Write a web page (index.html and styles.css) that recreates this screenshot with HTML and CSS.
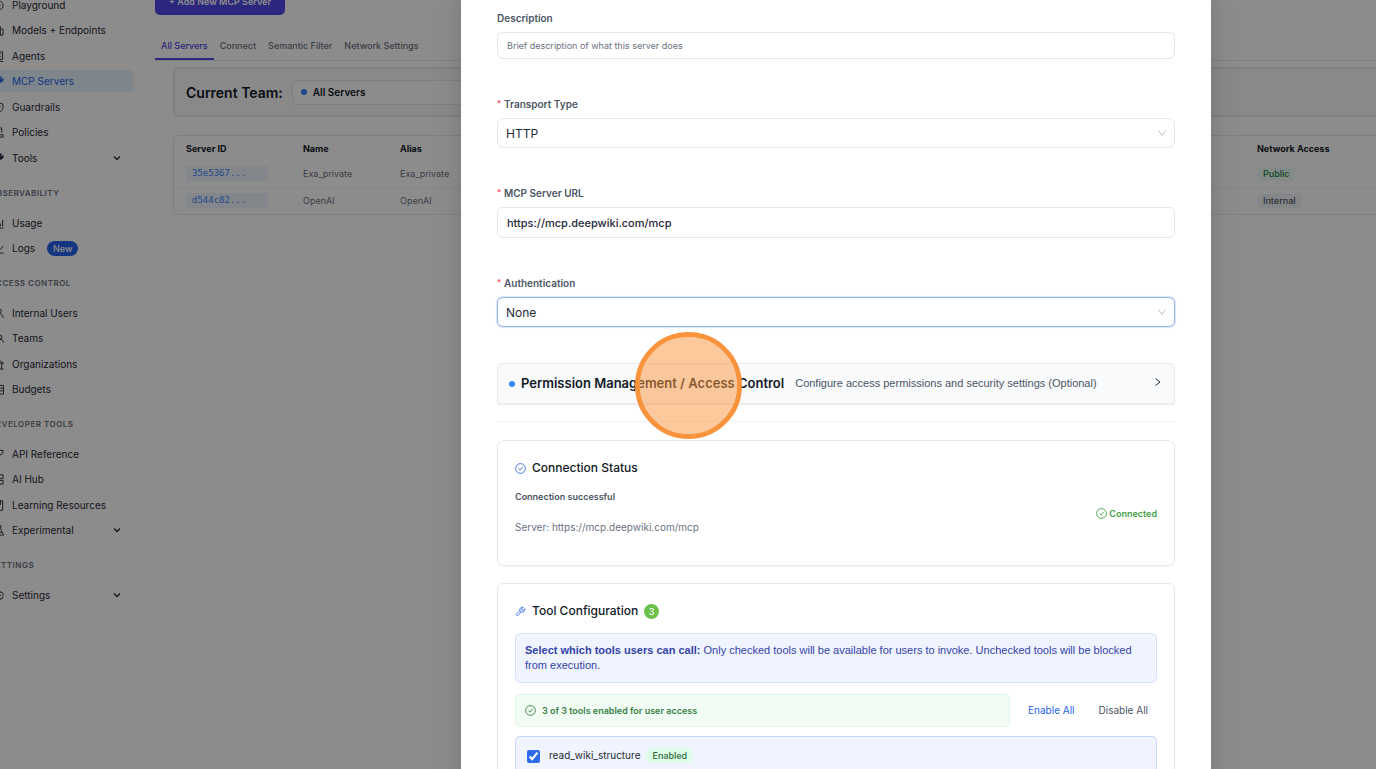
FILE: index.html
```
<!DOCTYPE html>
<html lang="en">
<head>
<meta charset="utf-8">
<title>MCP Servers</title>
<link rel="stylesheet" href="styles.css">
</head>
<body>
<div class="shell">
  <nav class="sidebar">
    <ul class="nav">
      <li><a class="nav-item" href="#"><svg class="icon" viewBox="0 0 12 12"><circle cx="6" cy="6" r="5"/><path d="M5 4l3 2-3 2z"/></svg>Playground</a></li>
      <li><a class="nav-item" href="#"><svg class="icon" viewBox="0 0 12 12"><path d="M1 4h7V1.500H4V11h7V4.500H8V11"/></svg>Models + Endpoints</a></li>
      <li><a class="nav-item" href="#"><svg class="icon" viewBox="0 0 12 12"><path d="M1.500 1h9v8h-9zM1 11.300h10M4 3.500h4.500M4 6h4.500"/></svg>Agents</a></li>
      <li><a class="nav-item selected" href="#"><svg class="icon" viewBox="0 0 12 12"><path d="M1 11l5-5M5.500 3.500a3 3 0 0 1 4-2.300L8 3l1 1 2-1.200a3 3 0 0 1-4 3.700z" fill="currentColor"/></svg>MCP Servers</a></li>
      <li><a class="nav-item" href="#"><svg class="icon" viewBox="0 0 12 12"><path d="M6 .800l4.800 1.500v4c0 2.500-2 4-4.800 5-2.800-1-4.800-2.500-4.800-5v-4zM4 6l1.500 1.500L8.300 4.500"/></svg>Guardrails</a></li>
      <li><a class="nav-item" href="#"><svg class="icon" viewBox="0 0 12 12"><path d="M2 11V1h7.500v5M2 11h9V8.500H7V11M4 3.500h3.500"/></svg>Policies</a></li>
      <li><a class="nav-item" href="#"><svg class="icon" viewBox="0 0 12 12"><path d="M1 11l5-5M5.500 3.500a3 3 0 0 1 4-2.300L8 3l1 1 2-1.200a3 3 0 0 1-4 3.700z" fill="currentColor"/></svg>Tools<svg class="caret" viewBox="0 0 8 8"><path d="M1 2.500l3 3 3-3"/></svg></a></li>
    </ul>
    <h2 class="nav-title">OBSERVABILITY</h2>
    <ul class="nav">
      <li><a class="nav-item" href="#"><svg class="icon" viewBox="0 0 12 12"><path d="M1 11h10.500M3 9V5M5.500 9V3M8 9V6M10.500 9V2"/></svg>Usage</a></li>
      <li><a class="nav-item" href="#"><svg class="icon" viewBox="0 0 12 12"><path d="M1 1v10h10.500M3 8l3-3 2 2 3.500-4"/></svg>Logs<span class="new-badge">New</span></a></li>
    </ul>
    <h2 class="nav-title">ACCESS CONTROL</h2>
    <ul class="nav">
      <li><a class="nav-item" href="#"><svg class="icon" viewBox="0 0 12 12"><circle cx="6.500" cy="3.500" r="2.500"/><path d="M2 11c0-3 2-5 4.500-5S11 8 11 11"/></svg>Internal Users</a></li>
      <li><a class="nav-item" href="#"><svg class="icon" viewBox="0 0 12 12"><circle cx="7.500" cy="4.500" r="2.200"/><path d="M4 10.500C4 8 5.500 6.800 7.500 6.800S11 8 11.500 10.500M3.500 6.500a2 2 0 1 1 1-4"/></svg>Teams</a></li>
      <li><a class="nav-item" href="#"><svg class="icon" viewBox="0 0 12 12"><path d="M.500 4.500L6 1l5.500 3.500zM1 11h10.500M2.500 4.500V11M6 4.500V11M9.500 4.500V11"/></svg>Organizations</a></li>
      <li><a class="nav-item" href="#"><svg class="icon" viewBox="0 0 12 12"><path d="M1 1.500h10.500v9.500H1zM1 4.500h10.500M7 7.500h4.500"/></svg>Budgets</a></li>
    </ul>
    <h2 class="nav-title">DEVELOPER TOOLS</h2>
    <ul class="nav">
      <li><a class="nav-item" href="#"><svg class="icon" viewBox="0 0 12 12"><path d="M1 7l3 3 2-2-3-3zM6.500 1.500h4.500C11 5 9.500 6.500 7 6.500"/></svg>API Reference</a></li>
      <li><a class="nav-item" href="#"><svg class="icon" viewBox="0 0 12 12"><path d="M1 1h4v4H1zM7 1h4v4H7zM1 7h4v4H1zM7 7h4v4H7z"/></svg>AI Hub</a></li>
      <li><a class="nav-item" href="#"><svg class="icon" viewBox="0 0 12 12"><path d="M1.500.800H10.500v10.400h-9zM5 1v4l1.700-1.200L8.300 5V1"/></svg>Learning Resources</a></li>
      <li><a class="nav-item" href="#"><svg class="icon" viewBox="0 0 12 12"><path d="M4 1h5M4.500 1v3.500L1.500 11h10L8.500 4.500V1M3 8h7"/></svg>Experimental<svg class="caret" viewBox="0 0 8 8"><path d="M1 2.500l3 3 3-3"/></svg></a></li>
    </ul>
    <h2 class="nav-title">SETTINGS</h2>
    <ul class="nav">
      <li><a class="nav-item" href="#"><svg class="icon" viewBox="0 0 12 12"><path d="M4.500 1h3l.6 1.600 1.700-.200 1.400 2.400L10.200 6l1 1.200-1.400 2.400-1.700-.200L7.500 11h-3l-.6-1.600-1.700.200L.800 7.200 1.800 6l-1-1.200 1.400-2.400 1.700.200z"/><circle cx="6" cy="6" r="1.800"/></svg>Settings<svg class="caret" viewBox="0 0 8 8"><path d="M1 2.500l3 3 3-3"/></svg></a></li>
    </ul>
  </nav>

  <main class="main">
    <button class="add-button" type="button">+ Add New MCP Server</button>
    <div class="tabs">
      <button class="tab active" type="button">All Servers</button>
      <button class="tab" type="button">Connect</button>
      <button class="tab" type="button">Semantic Filter</button>
      <button class="tab" type="button">Network Settings</button>
    </div>
    <div class="panel">
      <div class="team-bar">
        <label class="team-label" for="team">Current Team:</label>
        <div class="team-picker">
          <span class="dot team-dot"></span>
          <select class="team-select" id="team"><option>All Servers</option></select>
        </div>
      </div>
      <div class="table-box">
        <table class="servers">
          <colgroup><col class="col-id"><col class="col-name"><col><col class="col-access"></colgroup>
          <thead><tr><th>Server ID</th><th>Name</th><th>Alias</th><th>Network Access</th></tr></thead>
          <tbody>
            <tr><td><a class="server-id" href="#">35e5367...</a></td><td>Exa_private</td><td>Exa_private</td><td><span class="tag public">Public</span></td></tr>
            <tr><td><a class="server-id" href="#">d544c82...</a></td><td>OpenAI</td><td>OpenAI</td><td><span class="tag">Internal</span></td></tr>
          </tbody>
        </table>
      </div>
    </div>
  </main>

  <div class="mask">
    <div class="modal" role="dialog" aria-label="Add New MCP Server">
      <form class="fields">
        <div class="field">
          <label class="label" for="description">Description</label>
          <input class="control small" id="description" type="text" placeholder="Brief description of what this server does">
        </div>
        <div class="field">
          <label class="label required" for="transport">Transport Type</label>
          <div class="select-wrap">
            <select class="control" id="transport"><option>HTTP</option></select>
            <svg class="arrow" viewBox="0 0 10 10"><path d="M1.500 2.500L5 7.500l3.500-5"/></svg>
          </div>
        </div>
        <div class="field">
          <label class="label required" for="url">MCP Server URL</label>
          <input class="control" id="url" type="text" value="https://mcp.deepwiki.com/mcp">
        </div>
        <div class="field">
          <label class="label required" for="auth">Authentication</label>
          <div class="select-wrap">
            <select class="control focused" id="auth"><option>None</option></select>
            <svg class="arrow" viewBox="0 0 10 10"><path d="M1.500 2.500L5 7.500l3.500-5"/></svg>
          </div>
        </div>
      </form>

      <div class="accordion">
        <button class="accordion-head" type="button">
          <span class="dot"></span>
          <span class="accordion-title">Permission Management / Access Control</span>
          <span class="accordion-note">Configure access permissions and security settings (Optional)</span>
          <svg class="chevron" viewBox="0 0 8 8"><path d="M1.500 .500L6 4l-4.500 3.500"/></svg>
        </button>
        <span class="click-marker"></span>
      </div>

      <hr class="divider">

      <section class="card">
        <h3 class="card-title"><svg class="title-icon" viewBox="0 0 12 12"><circle cx="6" cy="6" r="5.300"/><path d="M3.800 6l1.700 1.800L8.300 4.300"/></svg>Connection Status</h3>
        <div class="status">
          <div>
            <p class="status-text">Connection successful</p>
            <p class="status-server">Server: https://mcp.deepwiki.com/mcp</p>
          </div>
          <span class="connected"><svg class="title-icon" viewBox="0 0 12 12"><circle cx="6" cy="6" r="5.300"/><path d="M3.800 6l1.700 1.800L8.300 4.300"/></svg>Connected</span>
        </div>
      </section>

      <section class="card">
        <h3 class="card-title"><svg class="title-icon" viewBox="0 0 12 12"><path d="M1.200 9.300l4-4c-.5-2.500 1.300-4.500 3.800-4L7.300 3l.2 1.500L9 4.700 10.700 3c.5 2.500-1.500 4.300-4 3.800l-4 4zM5.200 5.300l1.500 1.500"/></svg>Tool Configuration<span class="count">3</span></h3>
        <p class="info"><strong>Select which tools users can call:</strong> Only checked tools will be available for users to invoke. Unchecked tools will be blocked from execution.</p>
        <div class="summary">
          <p class="enabled-note"><svg class="title-icon" viewBox="0 0 12 12"><circle cx="6" cy="6" r="5.300"/><path d="M3.800 6l1.700 1.800L8.300 4.300"/></svg>3 of 3 tools enabled for user access</p>
          <button class="text-button primary" type="button">Enable All</button>
          <button class="text-button" type="button">Disable All</button>
        </div>
        <div class="tool">
          <input class="check" type="checkbox" id="tool-structure" checked>
          <label class="tool-name" for="tool-structure">read_wiki_structure</label>
          <span class="pill">Enabled</span>
        </div>
      </section>
    </div>
  </div>
</div>
</body>
</html>
```
FILE: styles.css
```
* { box-sizing: border-box; }
body {
  margin: 0;
  height: 100vh;
  overflow: hidden;
  background: #fff;
  color: #111827;
  font: 11px/17px Inter, "Liberation Sans", sans-serif;
}
button, input, select { font: inherit; color: inherit; margin: 0; }
button { cursor: pointer; }
a { text-decoration: none; color: inherit; }
h2, h3, p, ul { margin: 0; padding: 0; }
ul { list-style: none; }
svg { fill: none; stroke: currentColor; flex: none; }

/* The view is scrolled a little right and down inside a wider application. */
.shell {
  position: relative;
  display: flex;
  width: 125%;
  min-height: calc(100vh + 8px);
  margin: -8px 0 0 -24px;
}

/* Sidebar */
.sidebar { width: 179px; padding: 2px 21px 0 8px; flex: none; }
.nav li:nth-child(odd):not(:last-child) { margin-bottom: 3px; }
.nav li:nth-child(even):not(:last-child) { margin-bottom: 4px; }
.nav-item {
  display: flex;
  align-items: center;
  height: 22px;
  padding: 0 13px 0 9px;
  border-radius: 5px;
  font-size: 10px;
  color: #1f2937;
}
.nav-item.selected { background: #e6f4ff; color: #2563eb; }
.icon { width: 11px; height: 11px; margin-right: 8px; }
.caret { width: 8px; height: 8px; margin-left: auto; stroke-width: 1.3; }
.nav-title {
  margin: 18px 0 13px 6px;
  font-size: 8px;
  line-height: 12px;
  font-weight: 600;
  letter-spacing: 0.5px;
  color: #6b7280;
}
.new-badge {
  margin-left: 12px;
  padding: 0 6px;
  border-radius: 8px;
  background: #2563eb;
  color: #fff;
  font-size: 9px;
  font-weight: 500;
  line-height: 15px;
}

/* Page behind the dialog */
.main { flex: 1; min-width: 0; }
.add-button {
  display: block;
  height: 23px;
  padding: 0 14px 4px;
  border: 0;
  border-radius: 5px;
  background: #4f46e5;
  color: #fff;
  font-size: 9px;
  line-height: 19px;
  font-weight: 600;
}
.tabs { display: flex; margin-top: 17px; border-bottom: 1px solid #e5e7eb; }
.tab {
  padding: 5px 6px 4px;
  border: 0;
  border-bottom: 2px solid transparent;
  background: none;
  color: #6b7280;
  font-size: 9px;
  font-weight: 500;
}
.tab.active { border-color: #4f46e5; color: #4f46e5; }
.panel { padding: 6px 24px 0 18px; }
.team-bar {
  display: flex;
  align-items: center;
  gap: 9px;
  height: 50px;
  padding: 0 11px;
  border: 2px solid #e5e7eb;
  border-radius: 5px;
  background: #f9fafb;
}
.team-label { font-size: 14px; font-weight: 600; }
.team-picker { position: relative; width: 300px; }
.team-dot { position: absolute; left: 9px; top: 9px; }
.team-select {
  display: block;
  width: 100%;
  height: 25px;
  padding: 0 20px;
  border: 1px solid #e5e7eb;
  border-radius: 5px;
  background: #fff;
  appearance: none;
  font-size: 10px;
  font-weight: 600;
}
.dot { width: 6px; height: 6px; border-radius: 50%; background: #3b82f6; flex: none; }
.table-box { margin-top: 18px; border: 1px solid #e5e7eb; border-radius: 5px; }
.servers { width: 100%; table-layout: fixed; border-collapse: collapse; font-size: 9px; }
.col-id { width: 117px; }
.col-name { width: 97px; }
.col-access { width: 426px; }
.servers th { height: 24px; padding: 0 12px; text-align: left; font-weight: 700; line-height: 15px; }
.servers td { height: 27px; padding: 0 12px; color: #6b7280; }
.servers tbody tr + tr { border-top: 1px solid #f3f4f6; }
.server-id {
  display: block;
  width: 82px;
  padding-left: 6px;
  background: #eff6ff;
  color: #3b82f6;
  font: 9px/15px "DejaVu Sans Mono", "Liberation Mono", monospace;
}
.tag { display: inline-block; padding: 0 6px; border-radius: 4px; background: #f3f4f6; color: #4b5563; font-weight: 500; line-height: 14px; }
.tag.public { background: #f0fdf4; color: #15803d; }

/* Dialog */
.mask { position: absolute; inset: 0; background: rgba(0, 0, 0, 0.45); overflow: hidden; }
.modal {
  width: 750px;
  min-height: 100%;
  margin: 0 auto;
  padding: 18px 36px 24px;
  background: #fff;
  box-shadow: 0 6px 16px rgba(0, 0, 0, 0.08), 0 9px 28px 8px rgba(0, 0, 0, 0.05);
}
.fields { display: grid; gap: 37px; }
.field { display: grid; gap: 5px; }
.label { display: flex; font-size: 10px; font-weight: 600; color: #4b5563; }
.required::before { content: "*"; width: 7px; color: #ff4d4f; font-size: 8px; line-height: 14px; }
.control {
  display: block;
  width: 100%;
  height: 31px;
  padding: 0 9px;
  border: 1px solid #e5e7eb;
  border-radius: 6px;
  background: #fff;
  color: #1f2937;
  font-size: 11px;
  font-weight: 500;
  outline: 0;
}
select.control { height: 30px; padding: 0 8px; appearance: none; font-size: 12px; font-weight: 400; }
.control.small { height: 27px; font-size: 9px; font-weight: 400; }
.control::placeholder { color: #6b7280; }
.control.focused { border-color: #91b4ea; box-shadow: 0 0 1px 1px #dbe7fb; }
.select-wrap { position: relative; }
.arrow { position: absolute; right: 8px; top: 10px; width: 10px; height: 10px; color: #bfbfbf; }

.accordion { position: relative; margin-top: 36px; }
.accordion-head {
  display: flex;
  align-items: center;
  width: 100%;
  height: 41px;
  padding: 0 12px 0 11px;
  border: 1px solid #e8eaee;
  border-radius: 5px 5px 2px 2px;
  background: #f9fafb;
  box-shadow: 0 1px 1px rgba(0, 0, 0, 0.08);
}
.accordion-title { margin-left: 6px; font-size: 13px; font-weight: 600; color: #111827; }
.accordion-note { margin-left: 11px; color: #4b5563; font-family: "Liberation Sans", sans-serif; }
.chevron { width: 8px; height: 8px; margin: 0 0 4px auto; color: #1f2937; }
.click-marker {
  position: absolute;
  left: 138px;
  top: -31px;
  width: 107px;
  height: 107px;
  border: 5px solid #f9933c;
  border-radius: 50%;
  background: rgba(249, 147, 60, 0.5);
  background-clip: padding-box;
}
.divider { margin: 17px 0 18px; border: 0; border-top: 1px solid #f0f1f3; }

.card {
  padding: 17px 17px 29px;
  border: 1px solid #e5e7eb;
  border-radius: 7px;
  box-shadow: 0 1px 2px rgba(0, 0, 0, 0.04);
}
.card + .card { margin-top: 17px; }
.card-title {
  display: flex;
  align-items: center;
  font-size: 12px;
  line-height: 20px;
  font-weight: 500;
}
.title-icon { width: 11px; height: 11px; }
.card-title .title-icon { margin-right: 6px; color: #3b6fe0; }
.status { display: flex; justify-content: space-between; align-items: center; margin-top: 12px; }
.status-text { font-size: 9px; line-height: 14px; font-weight: 600; color: #4b5563; }
.status-server { margin-top: 15px; font-size: 10px; color: #6b7280; }
.connected { display: flex; align-items: center; gap: 2px; font-size: 9px; font-weight: 600; color: #45a047; }
.count {
  margin-left: 6px;
  width: 15px;
  border-radius: 50%;
  background: #6cc04a;
  color: #fff;
  font-size: 9px;
  line-height: 15px;
  text-align: center;
}
.info {
  margin-top: 12px;
  padding: 9px;
  border: 1px solid #d6e4fb;
  border-radius: 5px;
  background: #eff4fe;
  color: #3442a8;
  font-family: "Liberation Sans", sans-serif;
  line-height: 15px;
}
.info strong { font-weight: 700; }
.summary { display: flex; align-items: center; margin-top: 11px; }
.enabled-note {
  display: flex;
  align-items: center;
  gap: 6px;
  flex: 1;
  height: 33px;
  margin-right: 9px;
  padding: 0 9px;
  border: 1px solid #dcf7e4;
  border-radius: 5px;
  background: #f1fdf4;
  color: #3a7d44;
  font-size: 9px;
  font-weight: 600;
}
.text-button { padding: 0 9px; margin-left: 6px; border: 0; background: none; font-size: 10px; color: #4b5563; }
.text-button.primary { margin-left: 0; color: #2563eb; }
.tool {
  display: flex;
  align-items: flex-start;
  height: 62px;
  margin-top: 9px;
  padding: 10px 11px;
  border: 1px solid #c3d8fa;
  border-radius: 5px;
  background: #eff4fe;
}
.check { width: 13px; height: 13px; margin: 3px 0 0; accent-color: #2f6be8; }
.tool-name { margin-left: 9px; font-size: 10px; color: #1f2937; }
.pill { margin: 1px 0 0 6px; padding: 0 6px; border-radius: 8px; background: #dcfce7; color: #2f6b3c; font-size: 9px; font-weight: 500; line-height: 15px; }
```
